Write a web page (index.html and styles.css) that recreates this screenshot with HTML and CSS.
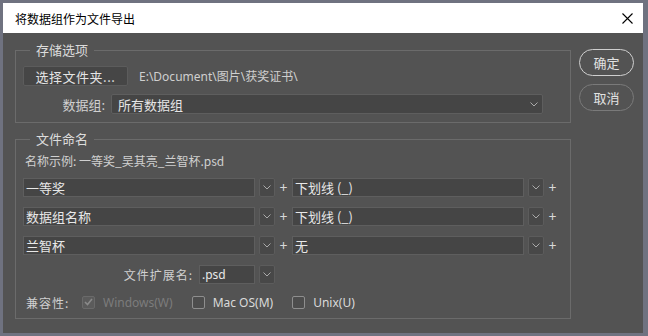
FILE: index.html
```html
<!DOCTYPE html>
<html lang="zh-CN">
<head>
    <meta charset="UTF-8">
    <title>将数据组作为文件导出</title>
    <link rel="stylesheet" href="styles.css">
</head>
<body>
    <div class="dialog">
        <div class="titlebar">
            <span class="title">将数据组作为文件导出</span>
            <svg class="close" width="11" height="11" viewBox="0 0 11 11"><path d="M0.5 0.5L10.5 10.5M10.5 0.5L0.5 10.5" stroke="#000" stroke-width="1.1"/></svg>
        </div>

        <div class="body">
            <div class="groups">
                <fieldset class="group">
                    <legend>存储选项</legend>
                    <div class="row">
                        <button class="btn-folder">选择文件夹...</button>
                        <span class="path">E:\Document\图片\获奖证书\</span>
                    </div>
                    <div class="row">
                        <span class="label label-set">数据组:</span>
                        <div class="select select-set">
                            <span>所有数据组</span>
                            <svg width="8" height="5" viewBox="0 0 8 5"><path d="M0.5 0.5L4 4L7.5 0.5" fill="none" stroke="#aaa"/></svg>
                        </div>
                    </div>
                </fieldset>

                <fieldset class="group naming">
                    <legend>文件命名</legend>
                    <div class="example">名称示例: 一等奖_吴其亮_兰智杯.psd</div>

                    <div class="row part-row">
                        <div class="field">一等奖</div>
                        <div class="chev"><svg width="8" height="5" viewBox="0 0 8 5"><path d="M0.5 0.5L4 4L7.5 0.5" fill="none" stroke="#aaa"/></svg></div>
                        <span class="plus">+</span>
                        <div class="field">下划线 (_)</div>
                        <div class="chev"><svg width="8" height="5" viewBox="0 0 8 5"><path d="M0.5 0.5L4 4L7.5 0.5" fill="none" stroke="#aaa"/></svg></div>
                        <span class="plus">+</span>
                    </div>
                    <div class="row part-row">
                        <div class="field">数据组名称</div>
                        <div class="chev"><svg width="8" height="5" viewBox="0 0 8 5"><path d="M0.5 0.5L4 4L7.5 0.5" fill="none" stroke="#aaa"/></svg></div>
                        <span class="plus">+</span>
                        <div class="field">下划线 (_)</div>
                        <div class="chev"><svg width="8" height="5" viewBox="0 0 8 5"><path d="M0.5 0.5L4 4L7.5 0.5" fill="none" stroke="#aaa"/></svg></div>
                        <span class="plus">+</span>
                    </div>
                    <div class="row part-row">
                        <div class="field">兰智杯</div>
                        <div class="chev"><svg width="8" height="5" viewBox="0 0 8 5"><path d="M0.5 0.5L4 4L7.5 0.5" fill="none" stroke="#aaa"/></svg></div>
                        <span class="plus">+</span>
                        <div class="field">无</div>
                        <div class="chev"><svg width="8" height="5" viewBox="0 0 8 5"><path d="M0.5 0.5L4 4L7.5 0.5" fill="none" stroke="#aaa"/></svg></div>
                        <span class="plus">+</span>
                    </div>

                    <div class="row part-row">
                        <span class="label label-ext">文件扩展名:</span>
                        <div class="field field-ext">.psd</div>
                        <div class="chev"><svg width="8" height="5" viewBox="0 0 8 5"><path d="M0.5 0.5L4 4L7.5 0.5" fill="none" stroke="#aaa"/></svg></div>
                    </div>

                    <div class="row compat">
                        <span class="label label-compat">兼容性:</span>
                        <label class="option disabled">
                            <span class="box checked"><svg width="9" height="8" viewBox="0 0 9 8"><path d="M1 4L3.5 6.5L8 1" fill="none" stroke="#8a8a8a" stroke-width="1.6"/></svg></span>
                            Windows(W)
                        </label>
                        <label class="option">
                            <span class="box"></span>
                            Mac OS(M)
                        </label>
                        <label class="option">
                            <span class="box"></span>
                            Unix(U)
                        </label>
                    </div>
                </fieldset>
            </div>

            <div class="side">
                <button class="btn-pill primary">确定</button>
                <button class="btn-pill">取消</button>
            </div>
        </div>
    </div>
</body>
</html>
```

FILE: styles.css
```css
* {
    margin: 0;
    padding: 0;
    box-sizing: border-box;
}
body {
    font-family: 'Noto Sans', 'Noto Sans CJK SC', sans-serif;
    font-size: 12px;
    color: #d8d8d8;
    background-color: #6f7280;
    overflow: hidden;
}
.dialog {
    width: 640px;
    height: 330px;
    margin: 3px 0 0 3px;
    background-color: #535353;
}
.titlebar {
    height: 30px;
    background: #fff;
    display: flex;
    align-items: center;
    justify-content: space-between;
    padding: 0 10px 0 12px;
}
.title {
    font-family: 'Noto Sans CJK SC', sans-serif;
    font-size: 12px;
    color: #000;
}
.body {
    display: flex;
    padding: 8px 0 0 12px;
}
.groups {
    width: 556px;
    display: flex;
    flex-direction: column;
    gap: 7px;
}
.group {
    border: 1px solid #6b6b6b;
    padding: 7px 7px 8px 7px;
    min-width: 0;
    display: flex;
    flex-direction: column;
    gap: 8px;
}
.group legend {
    font-family: 'Noto Sans CJK SC', sans-serif;
    font-size: 13px;
    line-height: 18px;
    color: #dcdcdc;
    margin-left: 7px;
    padding: 0 6px;
}
.row {
    display: flex;
    align-items: center;
}
.label {
    font-family: 'Noto Sans CJK SC', sans-serif;
    font-size: 12px;
    color: #d0d0d0;
}
.btn-folder {
    width: 105px;
    height: 20px;
    background: #464646;
    border: 1px solid #5c5c5c;
    border-radius: 2px;
    color: #e4e4e4;
    font-family: 'Noto Sans CJK SC', sans-serif;
    font-size: 13px;
    letter-spacing: 0.5px;
}
.path {
    margin-left: 11px;
    font-family: 'Noto Sans', 'Noto Sans CJK SC', sans-serif;
    color: #cfcfcf;
}
.label-set {
    width: 82px;
    text-align: right;
    margin-right: 6px;
    font-size: 13px;
}
.select {
    height: 20px;
    background: #454545;
    border: 1px solid #5e5e5e;
    border-radius: 2px;
    display: flex;
    align-items: center;
    justify-content: space-between;
    padding: 0 4px 0 6px;
    font-family: 'Noto Sans CJK SC', sans-serif;
    font-size: 13px;
    color: #e6e6e6;
}
.select-set {
    width: 432px;
}
.naming {
    gap: 10px;
    padding-top: 4px;
    padding-bottom: 8px;
}
.example {
    font-family: 'Noto Sans CJK SC', sans-serif;
    line-height: 18px;
    padding-left: 2px;
    color: #d0d0d0;
    margin-bottom: -2px;
}
.part-row {
    height: 19px;
}
.field {
    width: 232px;
    height: 19px;
    background: #454545;
    border: 1px solid #5e5e5e;
    padding-left: 2px;
    line-height: 17px;
    font-family: 'Noto Sans CJK SC', sans-serif;
    font-size: 13px;
    color: #e8e8e8;
}
.chev {
    width: 16px;
    height: 19px;
    margin-left: 4px;
    background: #484848;
    border: 1px solid #5c5c5c;
    border-radius: 2px;
    display: flex;
    align-items: center;
    justify-content: center;
}
.plus {
    width: 17px;
    text-align: center;
    font-size: 14px;
    color: #d8d8d8;
}
.label-ext {
    width: 170px;
    text-align: right;
    margin-right: 6px;
    letter-spacing: 1px;
}
.field-ext {
    width: 56px;
    font-family: 'Noto Sans', sans-serif;
    font-size: 12px;
}
.compat {
    height: 16px;
    margin-top: 0;
}
.label-compat {
    width: 59px;
    padding-left: 3px;
    letter-spacing: 1px;
}
.option {
    display: flex;
    align-items: center;
    gap: 8px;
    margin-right: 19px;
    color: #dadada;
}
.option.disabled {
    color: #7c7c7c;
}
.box {
    width: 13px;
    height: 13px;
    border: 1px solid #8e8e8e;
    background: #4d4d4d;
    border-radius: 2px;
    display: flex;
    align-items: center;
    justify-content: center;
}
.box.checked {
    border-color: #6a6a6a;
    background: #5b5b5b;
}
.side {
    display: flex;
    flex-direction: column;
    gap: 8px;
    margin-left: 8px;
    padding-top: 8px;
}
.btn-pill {
    width: 55px;
    height: 27px;
    border-radius: 14px;
    background: transparent;
    border: 1px solid #7a7a7a;
    color: #e2e2e2;
    font-family: 'Noto Sans CJK SC', sans-serif;
    font-size: 13px;
}
.btn-pill.primary {
    border: 1.5px solid #cfcfcf;
}
```
